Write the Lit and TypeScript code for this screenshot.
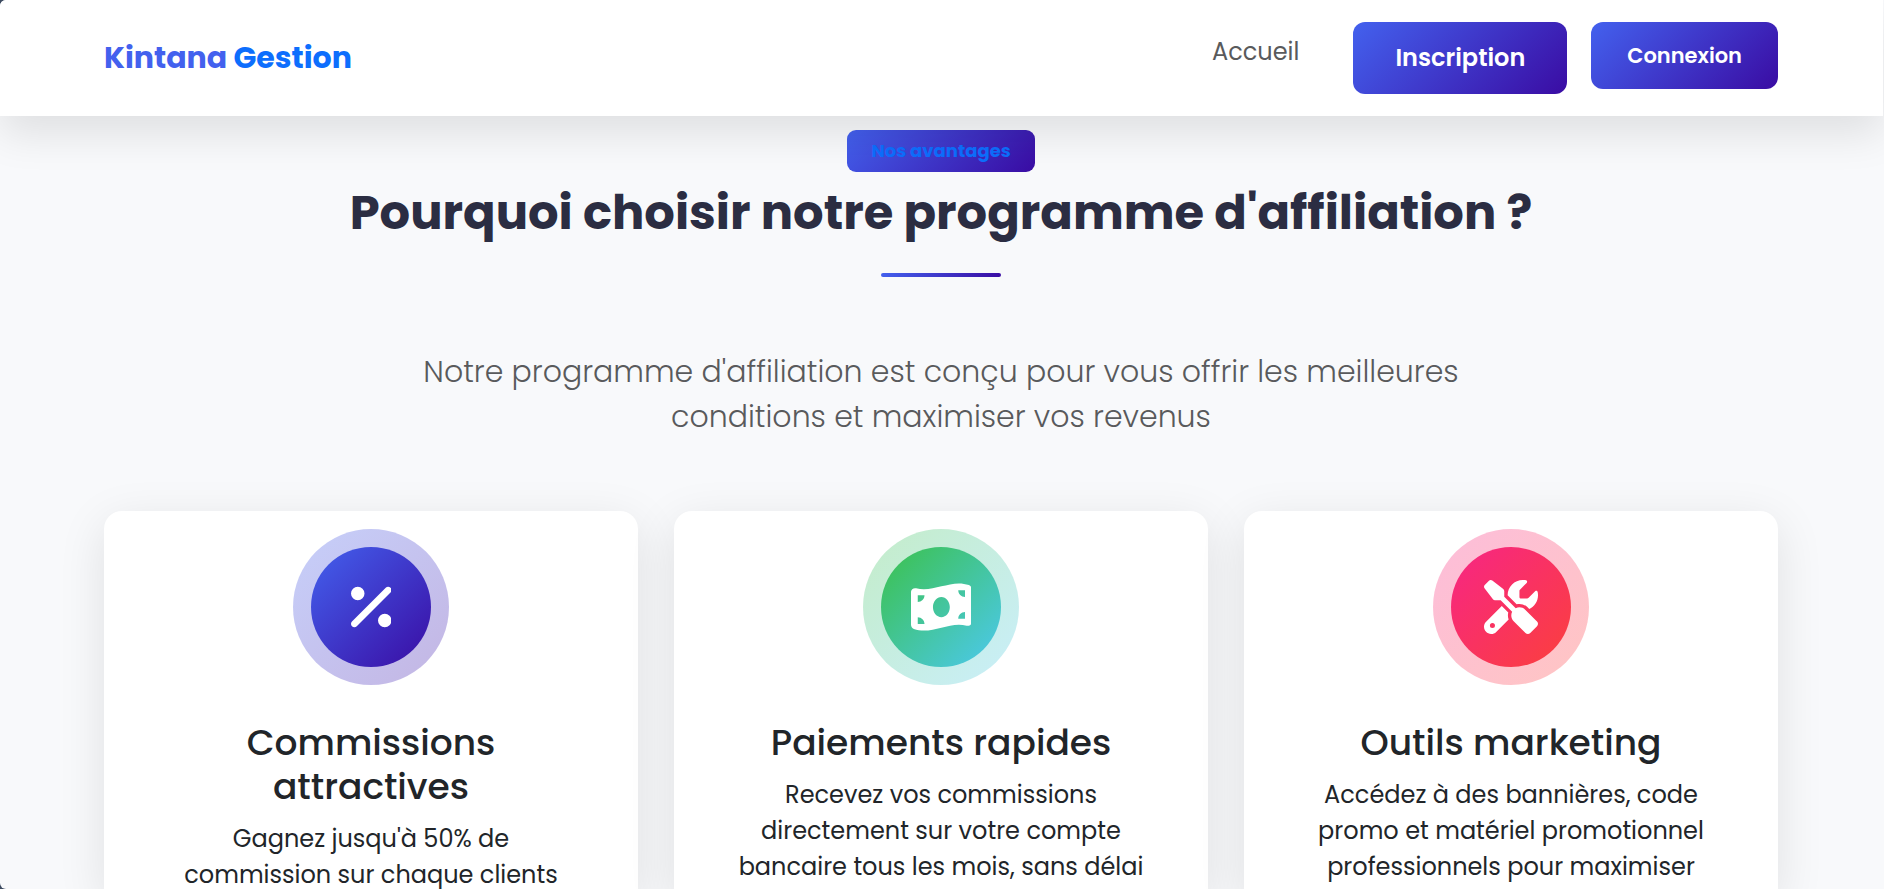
import { LitElement, html, css, svg } from "lit";
import { customElement } from "lit/decorators.js";
import { classMap } from "lit/directives/class-map.js";

interface Advantage {
  tone: "indigo" | "green" | "pink";
  viewWidth: number;
  path: string;
  title: string;
  text: string;
}

const ADVANTAGES: Advantage[] = [
  {
    tone: "indigo",
    viewWidth: 384,
    path: "M374.6 118.6c12.5-12.5 12.5-32.8 0-45.3s-32.8-12.5-45.3 0l-320 320c-12.5 12.5-12.5 32.8 0 45.3s32.8 12.5 45.3 0l320-320zM128 128A64 64 0 1 0 0 128a64 64 0 1 0 128 0zM384 384a64 64 0 1 0 -128 0 64 64 0 1 0 128 0z",
    title: "Commissions attractives",
    text: "Gagnez jusqu'à 50% de commission sur chaque clients",
  },
  {
    tone: "green",
    viewWidth: 576,
    path: "M0 112.5V422.3c0 18 10.1 35 27 41.3c87 32.5 174 10.3 261-11.9c79.8-20.3 159.6-40.7 239.3-18.9c23 6.3 48.7-9.5 48.7-33.4V89.7c0-18-10.1-35-27-41.3C462 15.9 375 38.1 288 60.3C208.2 80.6 128.4 100.9 48.7 79.1C25.6 72.8 0 88.6 0 112.5zM288 352c-44.2 0-80-43-80-96s35.8-96 80-96s80 43 80 96s-35.8 96-80 96zM64 352c35.3 0 64 28.7 64 64H64V352zm64-208c0 35.3-28.7 64-64 64V144h64zM512 304v64H448c0-35.3 28.7-64 64-64zM448 96h64v64c-35.3 0-64-28.7-64-64z",
    title: "Paiements rapides",
    text: "Recevez vos commissions directement sur votre compte bancaire tous les mois, sans délai",
  },
  {
    tone: "pink",
    viewWidth: 512,
    path: "M78.6 5C69.1-2.4 55.6-1.5 47 7L7 47c-8.5 8.5-9.4 22-2.1 31.6l80 104c4.5 5.9 11.6 9.4 19 9.4h54.1l109 109c-14.7 29-10 65.4 14.3 89.6l112 112c12.5 12.5 32.8 12.5 45.3 0l64-64c12.5-12.5 12.5-32.8 0-45.3l-112-112c-24.2-24.2-60.6-29-89.6-14.3l-109-109V104c0-7.5-3.5-14.5-9.4-19L78.6 5zM19.9 396.1C7.2 408.8 0 426.1 0 444.1C0 481.6 30.4 512 67.9 512c18 0 35.3-7.2 48-19.9L233.7 374.3c-7.8-20.9-9-43.6-3.6-65.1l-61.7-61.7L19.9 396.1zM512 144c0-10.5-1.1-20.7-3.2-30.5c-2.4-11.2-16.1-14.1-24.2-6l-63.9 63.9c-3 3-7.1 4.7-11.3 4.7H352c-8.8 0-16-7.2-16-16V102.6c0-4.2 1.7-8.3 4.7-11.3l63.9-63.9c8.1-8.1 5.2-21.8-6-24.2C388.7 1.1 378.5 0 368 0C288.5 0 224 64.5 224 144l0 .8 85.3 85.3c36-9.1 75.8 .5 104 28.7L429 274.5c49-23 83-72.8 83-130.5zM56 432a24 24 0 1 1 48 0 24 24 0 1 1 -48 0z",
    title: "Outils marketing",
    text: "Accédez à des bannières, code promo et matériel promotionnel professionnels pour maximiser",
  },
];

@customElement("app-root")
export class AppRoot extends LitElement {
  static styles = css`
    :host {
      --primary: linear-gradient(135deg, #4361ee, #3a0ca3);
      display: block;
      background: #3d4b60;
      color: #212529;
      font-family: Poppins, Inter, sans-serif;
      font-size: 24px;
      line-height: 36px;
    }
    * {
      box-sizing: border-box;
    }
    h2, h3, p {
      margin: 0;
    }
    a {
      text-decoration: none;
    }
    .page {
      display: flex;
      flex-direction: column;
      height: 100vh;
      overflow: hidden;
      padding-right: 1px;
      border-radius: 6px 0 0 6px;
      background: #f8f9fb;
    }
    .container {
      width: 100%;
      max-width: 1723px;
      margin: 0 auto;
      padding: 0 25px 0 24px;
    }
    .header {
      position: relative;
      z-index: 1;
      padding: 22px 0;
      background: #fff;
      box-shadow: 0 18px 42px rgba(0, 0, 0, 0.1);
    }
    .bar {
      display: flex;
      align-items: center;
      justify-content: space-between;
    }
    .brand {
      color: #4361ee;
      font-size: 30px;
      font-weight: 700;
    }
    .brand-accent {
      color: #0d6efd;
    }
    .nav {
      display: flex;
      align-items: flex-start;
      gap: 24px;
    }
    .link {
      padding: 12px 30px 0 0;
      color: #595a5c;
    }
    .button {
      padding: 18px 42px;
      border: 0;
      border-radius: 12px;
      background: var(--primary);
      color: #fff;
      font-family: inherit;
      font-size: 24px;
      font-weight: 600;
      line-height: 36px;
    }
    .button.small {
      padding: 18px 36px;
      font-size: 21px;
      line-height: 31px;
    }
    .main {
      display: flex;
      flex: 1;
      flex-direction: column;
      padding-top: 14px;
    }
    .intro {
      display: flex;
      flex-direction: column;
      align-items: center;
      text-align: center;
    }
    .badge {
      padding: 6px 24px;
      border-radius: 9px;
      background: var(--primary);
      color: #0d6efd;
      font-size: 18px;
      font-weight: 700;
      line-height: 30px;
    }
    .heading {
      margin-top: 12px;
      color: #2b2d42;
      font-size: 48px;
      font-weight: 700;
      line-height: 58px;
    }
    .rule {
      width: 120px;
      height: 4px;
      margin-top: 31px;
      border-radius: 2px;
      background: var(--primary);
    }
    .lead {
      max-width: 1100px;
      margin-top: 72px;
      color: #595a5c;
      font-size: 30px;
      font-weight: 300;
      line-height: 45px;
    }
    .cards {
      display: grid;
      flex: 1;
      grid-template-columns: repeat(3, 1fr);
      gap: 36px;
      margin-top: 72px;
    }
    .card {
      display: flex;
      flex-direction: column;
      align-items: center;
      padding: 18px 60px 0;
      border-radius: 18px 18px 0 0;
      background: #fff;
      box-shadow: 0 12px 48px rgba(0, 0, 0, 0.1);
      text-align: center;
    }
    .halo {
      display: grid;
      width: 156px;
      height: 156px;
      place-items: center;
      border-radius: 50%;
    }
    .disc {
      display: grid;
      width: 120px;
      height: 120px;
      place-items: center;
      border-radius: 50%;
    }
    .icon {
      height: 54px;
      fill: #fff;
    }
    .indigo .disc {
      background: var(--primary);
    }
    .indigo .halo {
      background: linear-gradient(135deg, #4361ee4d, #3a0ca34d);
    }
    .green .disc {
      background: linear-gradient(135deg, #3bc14a, #4cc9f0);
    }
    .green .halo {
      background: linear-gradient(135deg, #3bc14a4d, #4cc9f04d);
    }
    .pink .disc {
      background: linear-gradient(135deg, #f72585, #fb403c);
    }
    .pink .halo {
      background: linear-gradient(135deg, #f725854d, #ff40384d);
    }
    .title {
      margin: 36px 0 12px;
      font-size: 36px;
      font-weight: 500;
      line-height: 44px;
    }
  `;

  private renderCard(item: Advantage) {
    return html`
      <article class=${classMap({ card: true, [item.tone]: true })}>
        <div class="halo">
          <div class="disc">
            <svg class="icon" viewBox="0 0 ${item.viewWidth} 512" aria-hidden="true">
              ${svg`<path d=${item.path}></path>`}
            </svg>
          </div>
        </div>
        <h3 class="title">${item.title}</h3>
        <p>${item.text}</p>
      </article>
    `;
  }

  render() {
    return html`
      <div class="page">
        <header class="header">
          <div class="container bar">
            <a class="brand" href="#">Kintana <span class="brand-accent">Gestion</span></a>
            <nav class="nav">
              <a class="link" href="#">Accueil</a>
              <button class="button" type="button">Inscription</button>
              <button class="button small" type="button">Connexion</button>
            </nav>
          </div>
        </header>
        <main class="container main">
          <div class="intro">
            <span class="badge">Nos avantages</span>
            <h2 class="heading">Pourquoi choisir notre programme d'affiliation ?</h2>
            <div class="rule"></div>
            <p class="lead">
              Notre programme d'affiliation est conçu pour vous offrir les meilleures conditions et
              maximiser vos revenus
            </p>
          </div>
          <section class="cards">${ADVANTAGES.map((item) => this.renderCard(item))}</section>
        </main>
      </div>
    `;
  }
}
